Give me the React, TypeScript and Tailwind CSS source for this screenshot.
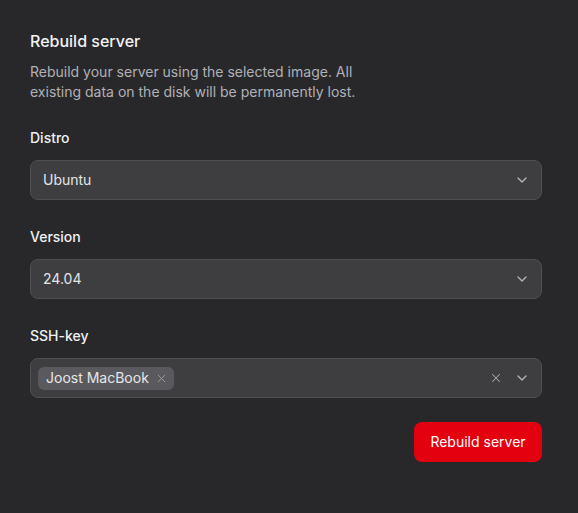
import { ChevronDown, X } from 'lucide-react';

function SelectBox({ value }: { value: string }) {
  return (
    <div className="flex h-10 items-center justify-between rounded-lg border border-[#4f4f54] bg-[#3e3e41] pl-[12px] pr-[11px]">
      <span className="text-sm text-[#e4e4e6]">{value}</span>
      <ChevronDown className="h-4 w-4 text-[#b4b4b8]" strokeWidth={2} />
    </div>
  );
}

export default function App() {
  return (
    <div
      className="min-h-screen bg-[#28282b] pl-[30px] pr-[36px] pt-[29px]"
      style={{ fontFamily: 'Inter, "Noto Sans", sans-serif' }}
    >
      {/* Header */}
      <h2 className="text-base font-medium leading-6 text-[#f2f2f3]">Rebuild server</h2>
      <p className="mt-[9px] max-w-[340px] text-sm leading-5 text-[#b1b1b5]">
        Rebuild your server using the selected image. All existing data on the disk will be permanently lost.
      </p>

      {/* Fields */}
      <div className="mt-[26px] flex flex-col gap-[27px]">
        <div>
          <label className="block text-sm font-medium leading-5 text-[#f0f0f2]">Distro</label>
          <div className="mt-3">
            <SelectBox value="Ubuntu" />
          </div>
        </div>

        <div>
          <label className="block text-sm font-medium leading-5 text-[#f0f0f2]">Version</label>
          <div className="mt-3">
            <SelectBox value="24.04" />
          </div>
        </div>

        <div>
          <label className="block text-sm font-medium leading-5 text-[#f0f0f2]">SSH-key</label>
          <div className="mt-3 flex h-10 items-center justify-between rounded-lg border border-[#4f4f54] bg-[#3e3e41] pl-[7px] pr-[11px]">
            <span className="flex h-[23px] items-center gap-[6px] rounded-md bg-[#5a5a5e] pl-[8px] pr-[6px] text-sm text-[#e6e6e8]">
              Joost MacBook
              <X className="h-[13px] w-[13px] text-[#9a9a9e]" strokeWidth={1.75} />
            </span>
            <div className="flex items-center gap-[11px]">
              <X className="h-[14px] w-[14px] text-[#a8a8ac]" strokeWidth={1.75} />
              <ChevronDown className="h-4 w-4 text-[#b4b4b8]" strokeWidth={2} />
            </div>
          </div>
        </div>
      </div>

      {/* Action */}
      <div className="mt-6 flex justify-end">
        <button className="h-10 w-32 rounded-lg bg-[#e3000f] text-sm font-normal text-white">
          Rebuild server
        </button>
      </div>
    </div>
  );
}
